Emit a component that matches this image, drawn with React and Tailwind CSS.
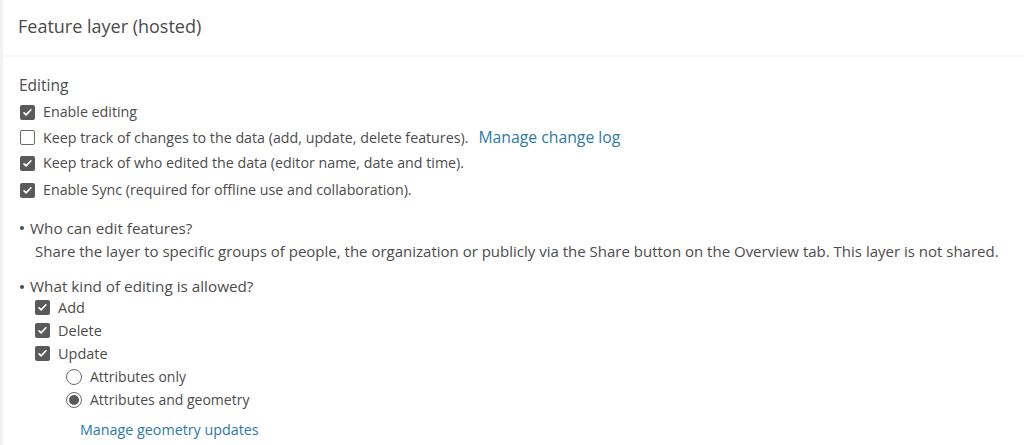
import React from 'react';

const Check = ({ checked }) => (
  checked ? (
    <span className="w-[15px] h-[15px] rounded-[2px] bg-[#5a5a5a] flex items-center justify-center shrink-0">
      <svg viewBox="0 0 16 16" className="w-[11px] h-[11px]">
        <path d="M3 8.5l3 3 7-7.5" fill="none" stroke="#fff" strokeWidth="2.4" strokeLinecap="round" strokeLinejoin="round" />
      </svg>
    </span>
  ) : (
    <span className="w-[15px] h-[15px] rounded-[2px] border border-[#6a6a6a] bg-white shrink-0" />
  )
);

const Radio = ({ checked }) => (
  <span className="w-[16px] h-[16px] rounded-full border border-[#6a6a6a] bg-white flex items-center justify-center shrink-0">
    {checked && <span className="w-[10px] h-[10px] rounded-full bg-[#5a5a5a]" />}
  </span>
);

const Row = ({ checked, children, className = '' }) => (
  <div className={`flex items-center gap-[8px] ${className}`}>
    <Check checked={checked} />
    <span>{children}</span>
  </div>
);

const Bullet = ({ children }) => (
  <div className="flex items-center gap-[6px] text-[15.25px]">
    <span className="w-[4px] h-[4px] rounded-full bg-[#4c4c4c] ml-[1px]" />
    <span>{children}</span>
  </div>
);

export default function App() {
  return (
    <div className="w-[1024px] h-[445px] bg-white overflow-hidden border-l-[3px] border-[#f2f2f2] text-[#4c4c4c] text-[14.25px] leading-none" style={{ fontFamily: '"Open Sans", "Noto Sans", sans-serif' }}>
      <div className="h-[57px] border-b-2 border-[#f5f5f5] flex items-center pl-[15px]">
        <h1 className="text-[18px] text-[#4a4a4a] pb-[3px]">Feature layer (hosted)</h1>
      </div>

      <div className="pl-[16px] pt-[21px]">
        <div className="h-[16px] flex items-center text-[15.5px]">Editing</div>

        <div className="flex flex-col gap-[10px] mt-[11px] pl-[1px]">
          <Row checked>Enable editing</Row>
          <div className="flex items-center gap-[8px]">
            <Check checked={false} />
            <span>Keep track of changes to the data (add, update, delete features).</span>
            <a className="ml-[2px] text-[#2b7aa8] text-[15.75px]">Manage change log</a>
          </div>
          <Row checked>Keep track of who edited the data (editor name, date and time).</Row>
          <Row checked className="mt-[2px]">Enable Sync (required for offline use and collaboration).</Row>
        </div>

        <div className="mt-[23px]">
          <Bullet>Who can edit features?</Bullet>
          <div className="pl-[16px] mt-[8px] text-[15px]">
            Share the layer to specific groups of people, the organization or publicly via the Share button on the Overview tab. This layer is not shared.
          </div>
        </div>

        <div className="mt-[20px]">
          <Bullet>What kind of editing is allowed?</Bullet>
          <div className="pl-[16px] flex flex-col gap-[8px] mt-[6px] text-[14.5px]">
            <Row checked>Add</Row>
            <Row checked>Delete</Row>
            <Row checked>Update</Row>
            <div className="pl-[31px] flex flex-col gap-[7px] text-[14px]">
              <div className="flex items-center gap-[8px]">
                <Radio checked={false} />
                <span>Attributes only</span>
              </div>
              <div className="flex items-center gap-[8px]">
                <Radio checked />
                <span>Attributes and geometry</span>
              </div>
              <a className="pl-[14px] mt-[8px] text-[#2b7aa8] text-[14.3px]">Manage geometry updates</a>
            </div>
          </div>
        </div>
      </div>
    </div>
  );
}
